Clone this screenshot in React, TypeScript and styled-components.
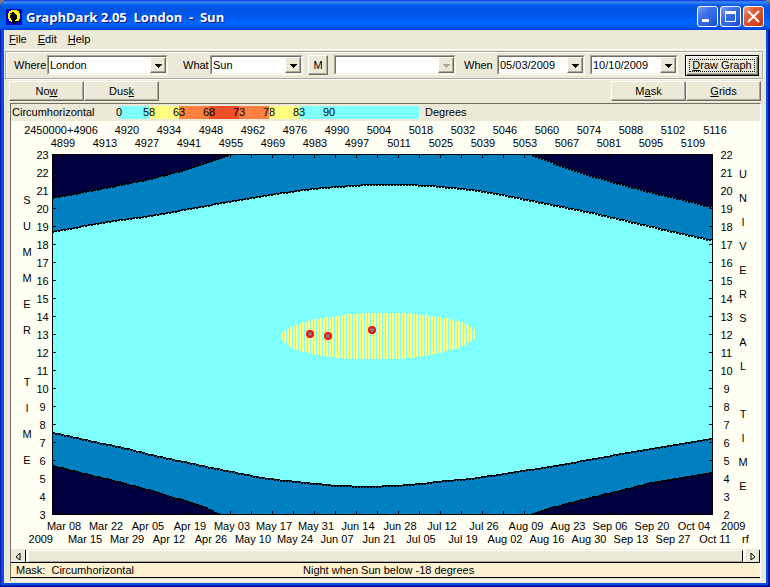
import React, { Fragment, ReactNode } from 'react';
import styled, { createGlobalStyle, css } from 'styled-components';

const Global = createGlobalStyle`
  * { box-sizing: border-box; }
  body {
    margin: 0;
    background: #808080;
    color: #000;
    font-family: "Liberation Sans", Arial, sans-serif;
    font-size: 11px;
    line-height: 13px;
  }
  button, select { font: inherit; color: inherit; }
`;

const FACE = '#ece9d8';
const SHADOW = '#aca899';
const PAPER = '#fffff4';

const raised = css`
  border: 1px solid;
  border-color: #fff #716f64 #716f64 #fff;
  box-shadow: inset -1px -1px ${SHADOW};
  background: ${FACE};
`;

const Window = styled.main`
  min-height: 100vh;
  display: flex;
  flex-direction: column;
  overflow: hidden;
  border-radius: 8px 8px 0 0;
  background: #0a4be4;
  box-shadow: inset 1px 0 #0019b0, inset -1px -1px #00138c, inset -2px -2px #001fb8;
`;

const TitleBar = styled.header`
  display: flex;
  align-items: center;
  gap: 4px;
  height: 30px;
  padding: 3px 6px 0;
  background: linear-gradient(#0831d9 0, #3c8cf5 2px, #0a5ceb 5px, #0054e3 9px, #0058ee 16px, #0066ff 23px, #0062f8 26px, #003dd7 30px);
`;

const Title = styled.h1`
  flex: 1;
  margin: 0;
  color: #fff;
  font: bold 13px/18px "Open Sans", "Noto Sans", sans-serif;
  text-shadow: 1px 1px #0f1089;
  white-space: pre;
`;

const CaptionButton = styled.button<{ $close?: boolean }>`
  width: 21px;
  height: 21px;
  padding: 0;
  border: 1px solid #fff;
  border-radius: 3px;
  background: ${p => p.$close
    ? 'linear-gradient(135deg, #f0a080 0, #e25a35 35%, #d8441c 75%, #b83210)'
    : 'linear-gradient(135deg, #7ea4f4 0, #3f70e8 35%, #2a5fe0 75%, #1847c4)'};
  svg { display: block; }
`;

const CaptionButtons = styled.div`
  display: flex;
  gap: 2px;
`;

const Client = styled.div`
  flex: 1;
  display: flex;
  flex-direction: column;
  margin: 0 4px 4px;
  background: ${FACE};
`;

const MenuBar = styled.nav`
  display: flex;
  height: 20px;
  border-bottom: 1px solid #fff;
`;

const MenuItem = styled.button`
  padding: 0 6px 0 5px;
  border: 0;
  background: none;
`;

const Toolbar = styled.section`
  display: flex;
  align-items: center;
  height: 28px;
  margin: 1px 3px 0 1px;
  padding: 0 3px 0 8px;
  border: 1px solid ${SHADOW};
  box-shadow: inset 1px 1px #fff, 1px 1px #fff;
`;

const Field = styled.div<{ $width: number; $gap?: number }>`
  display: flex;
  align-items: center;
  flex: ${p => p.$width} 1 0;
  margin-right: ${p => p.$gap ?? 0}px;
`;

const FieldLabel = styled.label<{ $width: number }>`
  width: ${p => p.$width}px;
`;

const ComboBox = styled.div`
  flex: 1;
  display: grid;
  height: 20px;
  border: 1px solid;
  border-color: ${SHADOW} #fff #fff ${SHADOW};
`;

const Select = styled.select`
  grid-area: 1 / 1;
  min-width: 0;
  width: 100%;
  height: 18px;
  padding: 0 16px 0 1px;
  border: 1px solid;
  border-color: #716f64 #f1efe2 #f1efe2 #716f64;
  border-radius: 0;
  appearance: none;
  background: #fff;
  line-height: 13px;
  opacity: 1;
`;

const Arrow = styled.span`
  grid-area: 1 / 1;
  justify-self: end;
  width: 16px;
  height: 16px;
  margin: 1px;
  pointer-events: none;
  ${raised}
  svg { display: block; }
`;

const PushButton = styled.button`
  ${raised}
  width: 75px;
  height: 20px;
  padding: 0;
`;

const SmallButton = styled(PushButton)`
  width: 20px;
  margin-right: 6px;
`;

const DefaultButton = styled(PushButton)`
  width: 74px;
  height: 21px;
  outline: 1px dotted #000;
  outline-offset: -5px;
  border-color: #000;
  box-shadow: inset 1px 1px #fff, inset -1px -1px #716f64, inset -2px -2px ${SHADOW};
`;

const ButtonRow = styled.div`
  display: flex;
  margin: 2px 5px 0 5px;
`;

const Spacer = styled.span`
  flex: 1;
`;

const GraphPanel = styled.section`
  display: flex;
  flex-direction: column;
  flex: 1;
  margin: 2px 5px 2px 6px;
  padding-bottom: 2px;
  border: 1px solid;
  border-color: #716f64 #fff #fff #716f64;
`;

const Legend = styled.div`
  display: flex;
  align-items: center;
  height: 17px;
  padding-left: 1px;
`;

const LegendName = styled.span`
  width: 107px;
`;

const Swatch = styled.span<{ $color: string; $width: number }>`
  display: flex;
  align-items: center;
  width: ${p => p.$width}px;
  height: 13px;
  background: ${p => p.$color};
`;

const SwatchLabel = styled.span`
  position: relative;
  display: flex;
  justify-content: center;
  width: 0;
`;

const LegendUnit = styled.span`
  margin-left: 6px;
`;

const Chart = styled.div`
  flex: 1;
  padding: 3px 0 2px;
  background: ${PAPER};
`;

const AxisRow = styled.div<{ $left: number; $right: number }>`
  display: grid;
  grid-template-columns: ${p => p.$left}px 1fr ${p => p.$right}px;
`;

const AxisLabels = styled.div`
  display: grid;
  grid-template-columns: repeat(16, minmax(0, 1fr));
`;

const AxisLabel = styled.span`
  display: flex;
  justify-content: center;
  white-space: nowrap;
`;

const AxisStart = styled.span`
  padding-right: 11px;
  text-align: right;
`;

const AxisEnd = styled.span`
  padding-left: 6px;
`;

const PlotRow = styled.div`
  display: grid;
  grid-template-columns: 41px 1fr 47px;
  margin: 4px 0 5px;
`;

const SideAxis = styled.div`
  display: flex;
  justify-content: space-between;
  margin: -8px 0 -9px;
`;

const LeftAxis = styled(SideAxis)`
  padding: 0 3px 0 10px;
`;

const RightAxis = styled(SideAxis)`
  padding: 0 11px 0 7px;
`;

const Hours = styled.div`
  width: 13px;
  line-height: 18px;
  text-align: center;
`;

const AxisTitle = styled.div<{ $pitch: number }>`
  width: 12px;
  align-self: center;
  padding-bottom: 10px;
  line-height: ${p => p.$pitch}px;
  text-align: center;
`;

const Letter = styled.div<{ $pitch: number }>`
  height: ${p => p.$pitch}px;
`;

const Plot = styled.svg`
  display: block;
  width: 100%;
  height: 361px;
`;

const ScrollBar = styled.div`
  display: flex;
  gap: 2px;
  height: 14px;
  border-top: 1px solid ${FACE};
  border-bottom: 1px solid #000;
  background: #fff;
`;

const ScrollArrow = styled.button`
  width: 15px;
  padding: 0;
  border: 0;
  border-right: 1px solid #000;
  background: ${FACE};
  svg { display: block; margin: auto; }
`;

const Thumb = styled.div`
  flex: 1;
  border: 1px solid;
  border-color: #fff #000 ${SHADOW} #fff;
  background: ${FACE};
`;

const StatusBar = styled.footer`
  display: grid;
  grid-template-columns: 287px 1fr;
  align-items: center;
  height: 15px;
  padding-left: 5px;
  border-bottom: 1px solid #000;
  background: #fdf1d0;
  white-space: pre;
`;

type Point = [number, number];

const TOP_DAY: Point[] = [[52, 231], [100, 222], [150, 215], [200, 206], [250, 197], [283, 192], [311, 188], [350, 185], [370, 184], [405, 184], [430, 185], [450, 187], [470, 189], [490, 192], [510, 196], [540, 202], [560, 206], [590, 212], [620, 219], [650, 226], [680, 233], [712, 240]];
const TOP_NIGHT: Point[] = [[52, 197], [100, 188], [150, 178], [180, 170], [200, 164], [225, 155], [230, 153], [528, 153], [533, 155], [543, 159], [560, 165], [583, 173], [610, 181], [640, 189], [660, 194], [690, 201], [712, 207]];
const BOTTOM_DAY: Point[] = [[52, 432], [83, 439], [117, 446], [150, 454], [200, 465], [255, 476], [275, 479], [295, 481], [315, 483], [335, 485], [365, 486], [395, 485], [420, 483], [445, 480], [470, 478], [490, 475], [515, 471], [543, 467], [577, 461], [610, 455], [650, 448], [680, 443], [712, 438]];
const BOTTOM_NIGHT: Point[] = [[52, 465], [83, 473], [117, 481], [150, 490], [180, 499], [200, 505], [219, 514], [222, 517], [525, 517], [530, 514], [543, 509], [577, 500], [610, 492], [650, 482], [680, 477], [712, 472]];
const ARC_TOP: Point[] = [[281, 333], [290, 327], [303, 322], [320, 318], [337, 316], [350, 314], [363, 313], [408, 313], [422, 315], [437, 317], [450, 319], [463, 323], [472, 328], [476, 332]];
const ARC_BOTTOM: Point[] = [[281, 340], [290, 348], [303, 352], [320, 356], [337, 358], [348, 359], [393, 359], [410, 358], [430, 355], [443, 352], [457, 348], [470, 342], [476, 335]];

function at(points: Point[], x: number) {
  const i = Math.max(1, points.findIndex(p => p[0] >= x));
  const [x0, y0] = points[i - 1];
  const [x1, y1] = points[i];
  return Math.round(y0 + ((y1 - y0) * (x - x0)) / (x1 - x0));
}

const days = Array.from({ length: 220 }, (_, i) => 52 + i * 3);

function area(points: Point[], edge: number) {
  return `M52 ${edge}` + days.map(x => `V${at(points, x)}h3`).join('') + `V${edge}Z`;
}

function outline(points: Point[]) {
  return days.map(x => {
    const y = at(points, x);
    return `M${x} ${y}h3v1h-1v1h-2Z`;
  }).join('');
}

const bars = Array.from({ length: 65 }, (_, i) => 281 + i * 3)
  .map(x => `M${x} ${at(ARC_TOP, x)}h2V${at(ARC_BOTTOM, x)}h-2Z`)
  .join('');

const weekTicks = Array.from({ length: 31 }, (_, i) => 62 + i * 21)
  .map(x => `M${x} 154h1v4h-1ZM${x} 511h1v4h-1Z`)
  .join('');
const hourTicks = Array.from({ length: 21 }, (_, i) => 154 + i * 18)
  .map(y => `M52 ${y}h4v1h-4ZM709 ${y}h4v1h-4Z`)
  .join('');

const events: Point[] = [[310, 334], [328, 336], [372, 330]];

function SunPlot() {
  return (
    <Plot viewBox="52 154 661 361" preserveAspectRatio="none" role="img" aria-label="Sun altitude through the year">
      <g shapeRendering="crispEdges">
        <rect x="52" y="154" width="661" height="361" fill="#80ffff" />
        <path d={area(TOP_DAY, 154)} fill="#0080c0" />
        <path d={area(TOP_NIGHT, 154)} fill="#000040" />
        <path d={area(BOTTOM_DAY, 515)} fill="#0080c0" />
        <path d={area(BOTTOM_NIGHT, 515)} fill="#000040" />
        {[TOP_DAY, TOP_NIGHT, BOTTOM_DAY, BOTTOM_NIGHT].map((c, i) => <path key={i} d={outline(c)} />)}
        <path d={bars} fill="#ffff80" />
        <path d={weekTicks + hourTicks} />
        <path d="M52 154h661v361h-661ZM53 155v359h659v-359Z" fillRule="evenodd" />
      </g>
      {events.map(([x, y]) => (
        <circle key={x} cx={x} cy={y} r="3" fill="#808080" stroke="#f01010" strokeWidth="2" />
      ))}
    </Plot>
  );
}

function Combo({ id, value, disabled, label }: { id: string; value: string; disabled?: boolean; label?: string }) {
  return (
    <ComboBox>
      <Select id={id} disabled={disabled} aria-label={label} defaultValue={value}>
        <option>{value}</option>
      </Select>
      <Arrow>
        <svg width="14" height="14" viewBox="0 0 14 14" shapeRendering="crispEdges">
          <path d="M4 6h7v1h-1v1h-1v1h-1v1h-1v-1h-1v-1h-1v-1h-1Z" fill={disabled ? SHADOW : '#000'} />
        </svg>
      </Arrow>
    </ComboBox>
  );
}

function Row({ left, right, labels, start, end }: { left: number; right: number; labels: ReactNode[]; start?: string; end?: string }) {
  return (
    <AxisRow $left={left} $right={right}>
      <AxisStart>{start}</AxisStart>
      <AxisLabels>{labels.map((l, i) => <AxisLabel key={i}>{l}</AxisLabel>)}</AxisLabels>
      <AxisEnd>{end}</AxisEnd>
    </AxisRow>
  );
}

const JulianPrefix = styled.span`
  margin-left: -48px;
`;

function VerticalTitle({ text, pitch }: { text: string; pitch: number }) {
  return (
    <AxisTitle $pitch={pitch}>
      {text.split('').map((c, i) => <Letter key={i} $pitch={pitch}>{c}</Letter>)}
    </AxisTitle>
  );
}

function HourScale({ from }: { from: number }) {
  return (
    <Hours>
      {Array.from({ length: 21 }, (_, i) => <div key={i}>{from - i}</div>)}
    </Hours>
  );
}

const julian = (start: number) => Array.from({ length: 16 }, (_, i) => start + i * 14);
const upperDates = ['Mar 08', 'Mar 22', 'Apr 05', 'Apr 19', 'May 03', 'May 17', 'May 31', 'Jun 14', 'Jun 28', 'Jul 12', 'Jul 26', 'Aug 09', 'Aug 23', 'Sep 06', 'Sep 20', 'Oct 04'];
const lowerDates = ['Mar 15', 'Mar 29', 'Apr 12', 'Apr 26', 'May 10', 'May 24', 'Jun 07', 'Jun 21', 'Jul 05', 'Jul 19', 'Aug 02', 'Aug 16', 'Aug 30', 'Sep 13', 'Sep 27', 'Oct 11'];

const bands = [
  { value: 0, color: '#80ffff', width: 30 },
  { value: 58, color: '#ffff80', width: 30 },
  { value: 63, color: '#ff8040', width: 30 },
  { value: 68, color: '#f05028', width: 30 },
  { value: 73, color: '#ff8040', width: 30 },
  { value: 78, color: '#ffff80', width: 30 },
  { value: 83, color: '#80ffff', width: 30 },
  { value: 90, color: '#80ffff', width: 90 },
];

export default function App() {
  const [first, ...rest] = julian(4906);
  return (
    <Fragment>
      <Global />
      <Window>
        <TitleBar>
          <svg width="16" height="16" viewBox="0 0 16 16" shapeRendering="crispEdges" aria-hidden="true">
            <rect width="16" height="16" fill="#0000c0" />
            <path d="M5 1h6v1h2v2h1v6h-1v2h-2v1h-6v-1h-2v-2h-1v-6h1v-2h2Z" fill="#ffff00" />
            <path d="M6 3h2v1h1v1h1v1h1v4h-1v1h-1v1h4v1h-3v1h-1v1h-2v-1h-4v-1h3v-2h-1v-2h-1v-3h1v-1h-1v-1h1Z" />
          </svg>
          <Title>{'GraphDark 2.05  London  -  Sun'}</Title>
          <CaptionButtons>
            <CaptionButton aria-label="Minimize">
              <svg width="19" height="19"><path d="M4 12h7v3h-7Z" fill="#fff" /></svg>
            </CaptionButton>
            <CaptionButton aria-label="Maximize">
              <svg width="19" height="19"><path d="M4 4h11v11h-11ZM5 7v7h9v-7Z" fill="#fff" fillRule="evenodd" /></svg>
            </CaptionButton>
            <CaptionButton aria-label="Close" $close>
              <svg width="19" height="19"><path d="M4 4l11 11M15 4l-11 11" stroke="#fff" strokeWidth="2" /></svg>
            </CaptionButton>
          </CaptionButtons>
        </TitleBar>
        <Client>
          <MenuBar>
            <MenuItem><u>F</u>ile</MenuItem>
            <MenuItem><u>E</u>dit</MenuItem>
            <MenuItem><u>H</u>elp</MenuItem>
          </MenuBar>
          <Toolbar>
            <Field $width={154} $gap={15}>
              <FieldLabel $width={33} htmlFor="where">Where</FieldLabel>
              <Combo id="where" value="London" />
            </Field>
            <Field $width={120} $gap={5}>
              <FieldLabel $width={27} htmlFor="what">What</FieldLabel>
              <Combo id="what" value="Sun" />
            </Field>
            <SmallButton>M</SmallButton>
            <Field $width={122} $gap={8}>
              <Combo id="object" value="" disabled label="Object" />
            </Field>
            <Field $width={121} $gap={5}>
              <FieldLabel $width={33} htmlFor="from">When</FieldLabel>
              <Combo id="from" value="05/03/2009" />
            </Field>
            <Field $width={88} $gap={7}>
              <Combo id="to" value="10/10/2009" label="To" />
            </Field>
            <DefaultButton><u>D</u>raw Graph</DefaultButton>
          </Toolbar>
          <ButtonRow>
            <PushButton>No<u>w</u></PushButton>
            <PushButton>Dus<u>k</u></PushButton>
            <Spacer />
            <PushButton>M<u>a</u>sk</PushButton>
            <PushButton><u>G</u>rids</PushButton>
          </ButtonRow>
          <GraphPanel>
            <Legend>
              <LegendName>Circumhorizontal</LegendName>
              {bands.map(b => (
                <Swatch key={b.value} $color={b.color} $width={b.width}>
                  <SwatchLabel>{b.value}</SwatchLabel>
                </Swatch>
              ))}
              <LegendUnit>Degrees</LegendUnit>
            </Legend>
            <Chart>
              <Row left={53} right={24} labels={[<JulianPrefix>2450000+{first}</JulianPrefix>, ...rest]} />
              <Row left={31} right={46} labels={julian(4899)} />
              <PlotRow>
                <LeftAxis>
                  <VerticalTitle text="SUMMER TIME" pitch={26} />
                  <HourScale from={23} />
                </LeftAxis>
                <SunPlot />
                <RightAxis>
                  <HourScale from={22} />
                  <VerticalTitle text="UNIVERSAL TIME" pitch={24} />
                </RightAxis>
              </PlotRow>
              <Row left={32} right={45} labels={upperDates} end="2009" />
              <Row left={53} right={24} labels={lowerDates} start="2009" end="rf" />
            </Chart>
            <ScrollBar>
              <ScrollArrow aria-label="Scroll left">
                <svg width="5" height="7"><path d="M4 0v7l-4 -3Z" fill="none" stroke="#000" /></svg>
              </ScrollArrow>
              <Thumb />
              <ScrollArrow aria-label="Scroll right">
                <svg width="5" height="7"><path d="M1 0v7l4 -3Z" fill="none" stroke="#000" /></svg>
              </ScrollArrow>
            </ScrollBar>
            <StatusBar>
              <span>{'Mask:  Circumhorizontal'}</span>
              <span>Night when Sun below -18 degrees</span>
            </StatusBar>
          </GraphPanel>
        </Client>
      </Window>
    </Fragment>
  );
}
